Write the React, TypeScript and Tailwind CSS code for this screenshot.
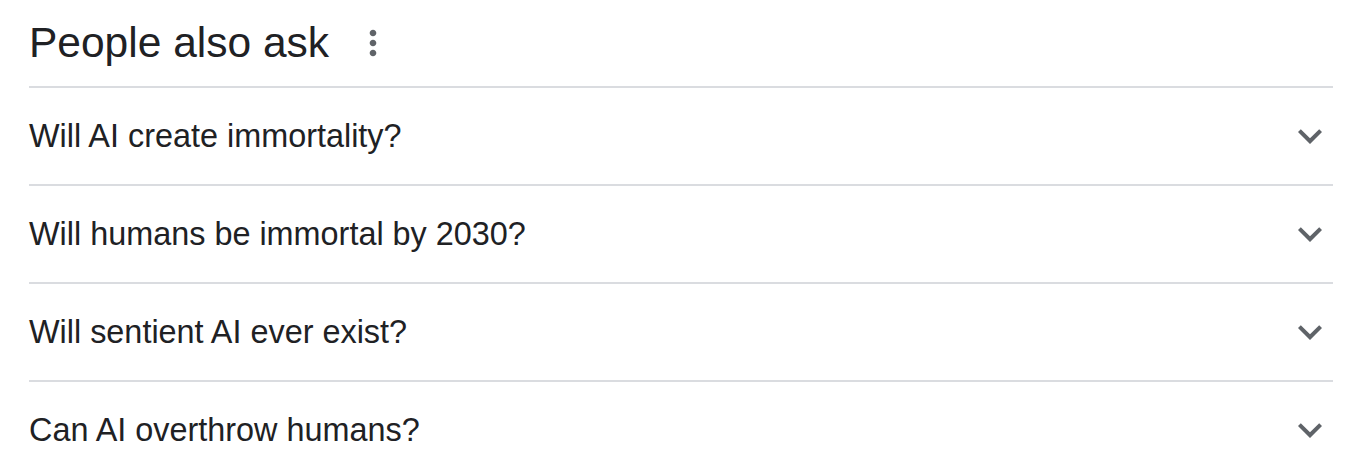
import React from "react";

const questions = [
    "Will AI create immortality?",
    "Will humans be immortal by 2030?",
    "Will sentient AI ever exist?",
    "Can AI overthrow humans?",
];

const ExpandMore = () => (
    <svg viewBox="0 0 24 24" className="w-12 h-12 fill-[#5f6368]">
        <path d="M16.59 8.59L12 13.17 7.41 8.59 6 10l6 6 6-6z" />
    </svg>
);

const MoreVert = () => (
    <svg viewBox="0 0 24 24" className="w-10 h-10 fill-[#5f6368]">
        <path d="M12 8c1.1 0 2-.9 2-2s-.9-2-2-2-2 .9-2 2 .9 2 2 2zm0 2c-1.1 0-2 .9-2 2s.9 2 2 2 2-.9 2-2-.9-2-2-2zm0 6c-1.1 0-2 .9-2 2s.9 2 2 2 2-.9 2-2-.9-2-2-2z" />
    </svg>
);

const App: React.FC = () => (
    <div className="w-[1356px] h-[468px] overflow-hidden bg-white font-['Liberation_Sans',Arial,sans-serif] text-[#202124]">
        <div className="pl-[29px] pr-[23px]">
            <div className="h-[86px] flex items-center gap-[24px]">
                <h2 className="text-[42.5px] leading-none">People also ask</h2>
                <MoreVert />
            </div>
            {questions.map((q) => (
                <div key={q} className="h-[98px] border-t-2 border-[#dadce0] flex items-center justify-between">
                    <span className="text-[32.4px] leading-none">{q}</span>
                    <span className="-mr-[1px]"><ExpandMore /></span>
                </div>
            ))}
        </div>
    </div>
);

export default App;
